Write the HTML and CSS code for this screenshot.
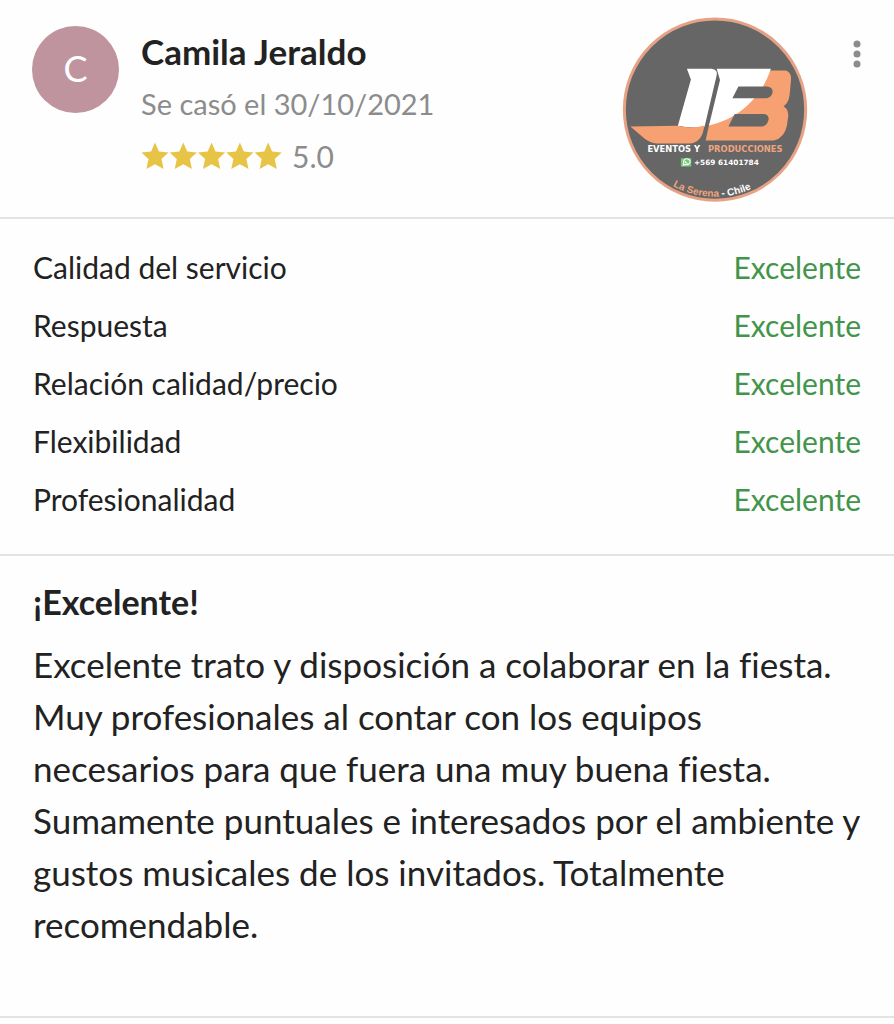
FILE: index.html
```html
<!DOCTYPE html>
<html lang="es">
<head>
<meta charset="utf-8">
<meta name="viewport" content="width=device-width, initial-scale=1">
<title>Opinión de Camila Jeraldo</title>
<link rel="stylesheet" href="styles.css">
</head>
<body>
<article class="review">
  <header class="review-header">
    <div class="avatar" aria-hidden="true">C</div>
    <div class="author">
      <h1 class="author-name">Camila Jeraldo</h1>
      <p class="author-date">Se casó el 30/10/2021</p>
      <div class="rating">
        <svg class="stars" viewBox="0 0 141 28" role="img" aria-label="5 de 5 estrellas">
          <defs><path id="star" d="M14 0.5 L17.9 9.4 27.6 10.4 20.5 17 22.6 27 14 22.2 5.4 27 7.5 17 0.4 10.4 10.1 9.4Z"/></defs>
          <use href="#star"/><use href="#star" x="28.3"/><use href="#star" x="56.6"/><use href="#star" x="84.9"/><use href="#star" x="113.2"/>
        </svg>
        <span>5.0</span>
      </div>
    </div>
    <svg class="brand" viewBox="21 19 556 556" role="img" aria-label="JB Eventos y Producciones">
      <circle cx="299" cy="299" r="271" fill="#666" stroke="#e6a284" stroke-width="9"/>
      <path fill="#fff" d="M215 177 H289 Q308 180 304 196 L268 349 Q230 356 188 347 L227 209Z"/>
      <path fill="#f7a072" d="M46 349 L188 347 Q228 358 268 346 L262 370 Q252 397 224 400 H125 Q105 398 89 386Z"/>
      <path fill="#f7a072" d="M440 182 H510 Q529 187 526 213 L522 255 Q519 279 504 289 Q519 298 518 319 L514 346 Q507 383 475 391 H271 L282 340Z"/>
      <path fill="#fff" d="M304 177 H466 C447 240 385 325 281 346 L314 210Z"/>
      <path fill="#666" d="M369 230 H454 Q473 232 471 248 Q467 263 454 265 H351Z M358 312 H445 Q462 315 459 330 Q454 347 441 349 H339Z"/>
      <g class="brand-text">
        <text class="brand-name" x="97" y="425" fill="#fff">EVENTOS Y</text>
        <text class="brand-name" x="278" y="425" fill="#f0a47e">PRODUCCIONES</text>
        <text x="236" y="465" fill="#fff">+569 61401784</text>
      </g>
      <rect x="197" y="444" width="31" height="25" fill="#76c878"/>
      <path fill="none" stroke="#fff" stroke-width="3" d="M204 465 L206 459 A10 9 0 1 1 211 463Z M209 452 Q210 459 217 460"/>
      <path id="arc" fill="none" d="M173 527 A260 260 0 0 0 430 524"/>
      <text class="brand-place"><textPath href="#arc"><tspan fill="#f0a47e">La Serena</tspan><tspan fill="#fff"> - Chile</tspan></textPath></text>
    </svg>
    <button class="menu" type="button" aria-label="Más opciones">
      <svg viewBox="0 0 8 28" aria-hidden="true"><circle cx="4" cy="4" r="3.5"/><circle cx="4" cy="14" r="3.5"/><circle cx="4" cy="24" r="3.5"/></svg>
    </button>
  </header>

  <dl class="scores">
    <div class="score"><dt>Calidad del servicio</dt><dd>Excelente</dd></div>
    <div class="score"><dt>Respuesta</dt><dd>Excelente</dd></div>
    <div class="score"><dt>Relación calidad/precio</dt><dd>Excelente</dd></div>
    <div class="score"><dt>Flexibilidad</dt><dd>Excelente</dd></div>
    <div class="score"><dt>Profesionalidad</dt><dd>Excelente</dd></div>
  </dl>

  <section class="comment">
    <h2 class="comment-title">¡Excelente!</h2>
    <p class="comment-text">Excelente trato y disposición a colaborar en la fiesta. Muy profesionales al contar con los equipos necesarios para que fuera una muy buena fiesta. Sumamente puntuales e interesados por el ambiente y gustos musicales de los invitados. Totalmente recomendable.</p>
  </section>
</article>
</body>
</html>
```
FILE: styles.css
```css
* { box-sizing: border-box; }
body, h1, h2, p, dl, dd { margin: 0; }
body {
  background: #fefefe;
  color: #222;
  font-family: Lato, "Open Sans", sans-serif;
  font-variant-ligatures: none;
}
.review-header {
  display: flex;
  align-items: flex-start;
  padding: 16px 33px 15px 32px;
  border-bottom: 2px solid #e3e3e3;
}
.avatar {
  display: flex;
  align-items: center;
  justify-content: center;
  flex: none;
  width: 87px;
  height: 87px;
  margin: 10px 22px 0 0;
  padding-bottom: 4px;
  border-radius: 50%;
  background: #bf949f;
  color: #fff;
  font-size: 36px;
}
.author {
  flex: 1;
  min-width: 0;
  padding-top: 9px;
}
.author-name {
  font-size: 35px;
  font-weight: 700;
  line-height: 52px;
}
.author-date {
  color: #8c8c8c;
  font-size: 29px;
  line-height: 54px;
}
.rating {
  display: flex;
  align-items: center;
  gap: 10px;
  color: #8c8c8c;
  font-size: 30px;
  line-height: 50px;
}
.stars {
  width: 141px;
  height: 28px;
  fill: #e8c446;
}
.brand {
  flex: none;
  width: 186px;
  height: 186px;
}
.brand-text {
  font: bold 22px "DejaVu Sans", sans-serif;
}
.brand-name {
  font-size: 25px;
}
.brand-place {
  font: bold 30px "Liberation Sans", sans-serif;
}
.menu {
  flex: none;
  margin: 24px 0 0 45px;
  padding: 0;
  border: 0;
  background: none;
}
.menu svg {
  display: block;
  width: 8px;
  height: 28px;
  fill: #8c8c8c;
}
.scores {
  padding: 19px 33px 26px;
  border-bottom: 2px solid #e3e3e3;
  font-size: 30px;
  line-height: 58px;
}
.score {
  display: flex;
  justify-content: space-between;
  gap: 16px;
}
.score dd { color: #43944b; }
.comment {
  padding: 20px 33px 66px;
  border-bottom: 2px solid #e3e3e3;
}
.comment-title {
  margin-bottom: 10px;
  font-size: 34px;
  line-height: 52px;
}
.comment-text {
  font-size: 35px;
  line-height: 52px;
}
```
